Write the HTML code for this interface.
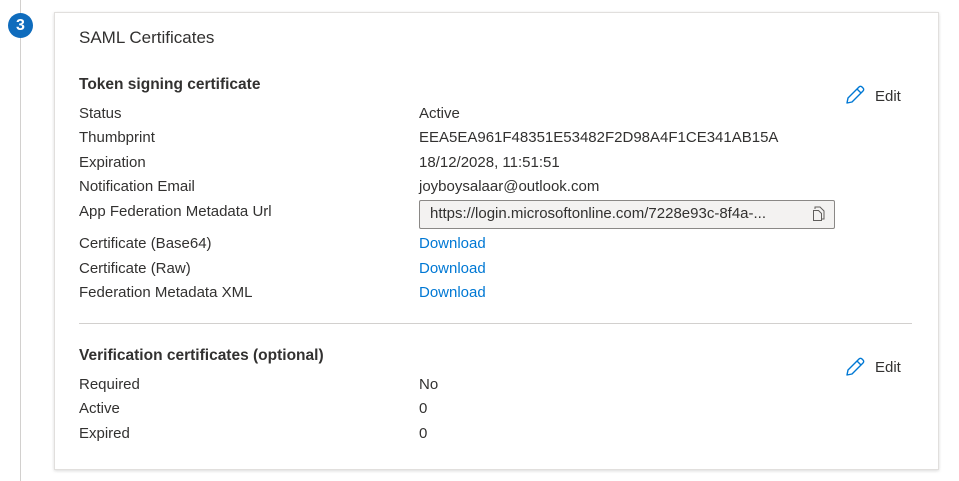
<!DOCTYPE html>
<html><head><style>
body{margin:0;width:959px;height:481px;background:#fff;font-family:"Liberation Sans",sans-serif;color:#323130;position:relative;overflow:hidden;font-size:15px}
.a{position:absolute;white-space:nowrap;line-height:18px}
.l{left:79px}.v{left:419px}
.link{color:#0078d4}
</style></head><body>
<div style="position:absolute;left:20px;top:0;width:1px;height:481px;background:#d2d0ce"></div>
<div style="position:absolute;left:8px;top:13px;width:25px;height:25px;border-radius:50%;background:#0f6cbd;color:#fff;font-weight:bold;font-size:16px;line-height:25px;text-align:center">3</div>
<div style="position:absolute;left:54px;top:12px;width:883px;height:456px;border:1px solid #e1dfdd;box-shadow:0 1px 3px rgba(0,0,0,.15);background:#fff"></div>
<div class="a l" style="top:27px;font-size:17px;line-height:22px">SAML Certificates</div>
<div class="a l" style="top:76px;font-weight:bold;font-size:15.5px">Token signing certificate</div>
<div class="a l" style="top:105px">Status</div><div class="a v" style="top:105px">Active</div>
<div class="a l" style="top:129px">Thumbprint</div><div class="a v" style="top:129px">EEA5EA961F48351E53482F2D98A4F1CE341AB15A</div>
<div class="a l" style="top:154px">Expiration</div><div class="a v" style="top:154px">18/12/2028, 11:51:51</div>
<div class="a l" style="top:178px">Notification Email</div><div class="a v" style="top:178px">joyboysalaar@outlook.com</div>
<div class="a l" style="top:203px">App Federation Metadata Url</div>
<div style="position:absolute;left:419px;top:200px;width:414px;height:27px;border:1px solid #8a8886;border-radius:2px;background:#f3f2f1"></div>
<div class="a" style="left:430px;top:205px">https://login.microsoftonline.com/7228e93c-8f4a-...</div>
<svg style="position:absolute;left:812px;top:206px" width="14" height="16" viewBox="0 0 14 16"><path d="M3 3V1h5l4 4v8H9" fill="none" stroke="#605e5c"/><path d="M1.5 4.5h5l3 3v7h-8z" fill="none" stroke="#605e5c"/></svg>
<div class="a l" style="top:235px">Certificate (Base64)</div><div class="a v link" style="top:235px">Download</div>
<div class="a l" style="top:260px">Certificate (Raw)</div><div class="a v link" style="top:260px">Download</div>
<div class="a l" style="top:284px">Federation Metadata XML</div><div class="a v link" style="top:284px">Download</div>
<div style="position:absolute;left:79px;top:323px;width:833px;height:1px;background:#d2d0ce"></div>
<div class="a l" style="top:347px;font-weight:bold;font-size:15.5px">Verification certificates (optional)</div>
<div class="a l" style="top:376px">Required</div><div class="a v" style="top:376px">No</div>
<div class="a l" style="top:400px">Active</div><div class="a v" style="top:400px">0</div>
<div class="a l" style="top:425px">Expired</div><div class="a v" style="top:425px">0</div>
<svg style="position:absolute;left:845px;top:85px" width="20" height="20" viewBox="0 0 20 20"><path d="M2 18l1-5L14 2a2 2 0 0 1 3 0l1 1a2 2 0 0 1 0 3L7 17z M12 4l4 4" fill="none" stroke="#0078d4" stroke-width="1.4" stroke-linejoin="round"/></svg>
<div class="a" style="left:875px;top:88px">Edit</div>
<svg style="position:absolute;left:845px;top:357px" width="20" height="20" viewBox="0 0 20 20"><path d="M2 18l1-5L14 2a2 2 0 0 1 3 0l1 1a2 2 0 0 1 0 3L7 17z M12 4l4 4" fill="none" stroke="#0078d4" stroke-width="1.4" stroke-linejoin="round"/></svg>
<div class="a" style="left:875px;top:359px">Edit</div>
</body></html>
